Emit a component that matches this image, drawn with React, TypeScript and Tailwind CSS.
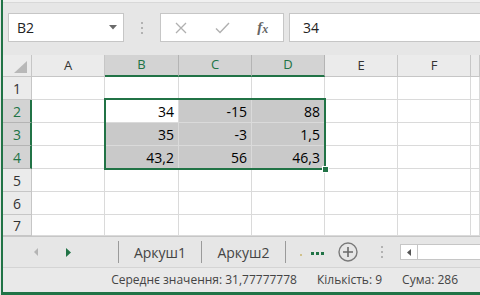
import React from "react";

const cols = ["A", "B", "C", "D", "E", "F", ""];
const selCols = ["B", "C", "D"];

const data: Record<number, string[]> = {
  2: ["34", "-15", "88"],
  3: ["35", "-3", "1,5"],
  4: ["43,2", "56", "46,3"],
};

function HeaderRow() {
  return (
    <>
      <div className="flex items-end justify-end border-r border-b border-[#c6c6c6] bg-[#ebebeb] pr-[4px] pb-[3px]">
        <svg width="13" height="12" viewBox="0 0 13 12">
          <polygon points="13,0 13,12 0,12" fill="#b8b8b8" />
        </svg>
      </div>
      {cols.map((c, i) => {
        const sel = selCols.includes(c);
        return (
          <div
            key={i}
            className={
              sel
                ? "flex items-center justify-center border-r border-r-[#b4b4b4] border-b-2 border-b-[#217346] bg-[#d3d3d3] text-[13px] text-[#217346]"
                : "flex items-center justify-center border-r border-b border-[#c6c6c6] bg-[#ebebeb] text-[13px] text-[#333]"
            }
          >
            {c}
          </div>
        );
      })}
    </>
  );
}

function Row({ n }: { n: number }) {
  const vals = data[n];
  const sel = !!vals;
  return (
    <>
      <div
        className={
          sel
            ? "flex items-center justify-center border-r-2 border-r-[#217346] border-b border-b-[#b4b4b4] bg-[#d3d3d3] pl-px text-[14px] text-[#217346]"
            : "flex items-center justify-center border-r border-b border-[#c6c6c6] bg-[#ebebeb] text-[14px] text-[#333]"
        }
      >
        {n}
      </div>
      {cols.map((c, i) => {
        const idx = selCols.indexOf(c);
        const inRange = sel && idx >= 0;
        const active = n === 2 && c === "B";
        return (
          <div
            key={i}
            className={
              inRange && !active
                ? "flex items-center justify-end border-r border-b border-[#dadada] bg-[#c9c9c9] pr-[4px] text-[14px] text-black"
                : "flex items-center justify-end border-r border-b border-[#dadada] bg-white pr-[4px] text-[14px] text-black"
            }
          >
            {inRange ? vals[idx] : ""}
          </div>
        );
      })}
    </>
  );
}

function Dots() {
  return (
    <div className="flex flex-col gap-[3px]">
      <span className="h-[2px] w-[2px] rounded-full bg-[#a0a0a0]" />
      <span className="h-[2px] w-[2px] rounded-full bg-[#a0a0a0]" />
      <span className="h-[2px] w-[2px] rounded-full bg-[#a0a0a0]" />
    </div>
  );
}

export default function App() {
  return (
    <div className="h-[295px] w-[480px] overflow-hidden bg-[#e6e6e6] pl-px font-['Open_Sans',sans-serif]">
      <div className="flex h-full flex-col border-b-[3px] border-l-2 border-[#217346]">
        {/* Formula bar */}
        <div className="h-[55px] shrink-0 bg-[#e6e6e6]">
          <div className="h-[3px] border-b border-[#d8d8d8] bg-[#f0f0f0]" />
          <div className="mt-[10px] flex h-[29px] items-stretch">
            <div className="ml-[5px] flex w-[116px] items-center justify-between border border-[#c6c6c6] bg-white pl-[8px] pr-[6px] text-[14px] text-[#222]">
              <span>B2</span>
              <svg width="8" height="5" viewBox="0 0 8 5">
                <polygon points="0,0 8,0 4,4.5" fill="#6a6a6a" />
              </svg>
            </div>
            <div className="flex w-[36px] items-center justify-center">
              <Dots />
            </div>
            <div className="flex w-[124px] border border-[#c6c6c6] bg-white">
              <div className="flex flex-1 items-center justify-center">
                <svg width="12" height="12" viewBox="0 0 12 12">
                  <path d="M1 1 L11 11 M11 1 L1 11" stroke="#b0b0b0" strokeWidth="1.3" />
                </svg>
              </div>
              <div className="flex flex-1 items-center justify-center">
                <svg width="15" height="12" viewBox="0 0 15 12">
                  <path d="M1 6.5 L5 10.5 L14 1" stroke="#b0b0b0" strokeWidth="1.4" fill="none" />
                </svg>
              </div>
              <div className="flex flex-1 items-center justify-center pb-px font-['Liberation_Serif',serif] text-[15px] italic text-[#666]">
                <span className="font-bold">f</span>
                <span className="mt-[4px] text-[12px] font-bold">x</span>
              </div>
            </div>
            <div className="ml-[5px] flex flex-1 items-center border border-r-0 border-[#c6c6c6] bg-white pl-[13px] text-[14px] text-[#222]">
              34
            </div>
          </div>
        </div>

        {/* Grid */}
        <div className="relative grid shrink-0 grid-cols-[29px_73px_74px_73px_73px_73px_73px_1fr] grid-rows-[22px_repeat(6,23px)_21px]">
          <HeaderRow />
          {[1, 2, 3, 4, 5, 6, 7].map((n) => (
            <Row key={n} n={n} />
          ))}
          <div className="absolute left-[101px] top-[43px] h-[72px] w-[222px] border-2 border-[#217346]">
            <div className="absolute -bottom-[5px] -right-[5px] h-[7px] w-[7px] border border-white bg-[#217346]" />
          </div>
        </div>

        {/* Sheet tabs */}
        <div className="flex h-[31px] shrink-0 items-center border-t border-[#c6c6c6] bg-[#e6e6e6]">
          <svg className="ml-[31px]" width="4" height="8" viewBox="0 0 4 8">
            <polygon points="4,0 4,8 0,4" fill="#b4b4b4" />
          </svg>
          <svg className="ml-[28px]" width="5" height="9" viewBox="0 0 5 9">
            <polygon points="0,0 5,4.5 0,9" fill="#217346" />
          </svg>
          <div className="ml-[47px] h-[22px] w-px bg-[#9a9a9a]" />
          <div className="flex w-[82px] justify-center text-[14px] text-[#444]">Аркуш1</div>
          <div className="h-[22px] w-px bg-[#9a9a9a]" />
          <div className="flex w-[83px] justify-center text-[14px] text-[#444]">Аркуш2</div>
          <div className="h-[22px] w-px bg-[#9a9a9a]" />
          <span className="ml-[14px] mt-[6px] h-[2px] w-[2px] rounded-full bg-[#c8b46e]" />
          <div className="ml-[9px] flex gap-[2px] pt-[3px]">
            <span className="h-[3px] w-[3px] bg-[#217346]" />
            <span className="h-[3px] w-[3px] bg-[#217346]" />
            <span className="h-[3px] w-[3px] bg-[#217346]" />
          </div>
          <svg className="ml-[14px]" width="20" height="20" viewBox="0 0 20 20">
            <circle cx="10" cy="10" r="9" stroke="#7a7a7a" strokeWidth="1.4" fill="none" />
            <path d="M10 5 V15 M5 10 H15" stroke="#6a6a6a" strokeWidth="1.6" />
          </svg>
          <div className="ml-[23px]">
            <Dots />
          </div>
          <div className="ml-[17px] flex h-[16px] flex-1 items-stretch border border-r-0 border-[#c6c6c6] bg-white">
            <div className="flex w-[17px] items-center justify-center border-r border-[#c6c6c6]">
              <svg width="4" height="7" viewBox="0 0 4 7">
                <polygon points="4,0 4,7 0,3.5" fill="#555" />
              </svg>
            </div>
          </div>
        </div>

        {/* Status bar */}
        <div className="flex h-[25px] shrink-0 items-center justify-end gap-[20px] border-t border-[#d4d4d4] bg-[#e9e9e9] pr-[22px] text-[12px] text-[#444]">
          <span>Середнє значення: 31,77777778</span>
          <span>Кількість: 9</span>
          <span>Сума: 286</span>
        </div>
      </div>
    </div>
  );
}
